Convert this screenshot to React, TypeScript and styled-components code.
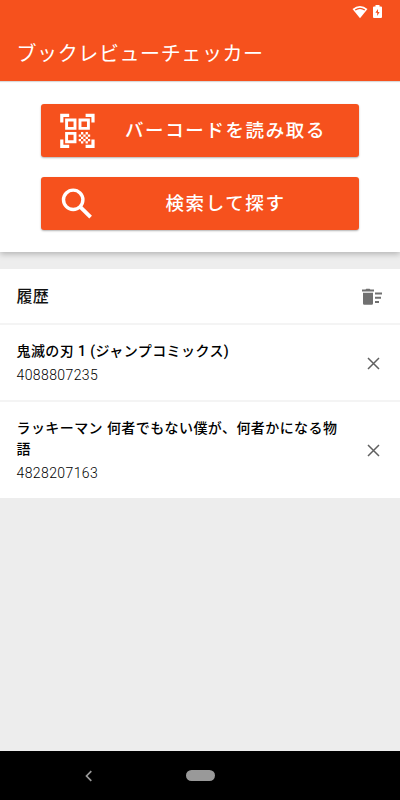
import React from 'react';
import styled, { createGlobalStyle } from 'styled-components';

const GlobalStyle = createGlobalStyle`
  * { box-sizing: border-box; }
  body { margin: 0; background: #ededed; font-family: Roboto, "Noto Sans CJK JP", sans-serif; }
`;

const Screen = styled.div`
  width: 400px;
  height: 800px;
  display: flex;
  flex-direction: column;
  overflow: hidden;
  background: #ededed;
`;

const AppBar = styled.header`
  height: 81px;
  flex: none;
  display: flex;
  flex-direction: column;
  background: #f6511d;
  color: #fff;
  box-shadow: 0 1px 1px rgba(0, 0, 0, 0.15);
  z-index: 1;
`;

const StatusBar = styled.div`
  height: 24px;
  display: flex;
  justify-content: flex-end;
  align-items: center;
  gap: 5px;
  padding-right: 18px;
`;

const Title = styled.h1`
  margin: 0;
  padding: 3px 0 0 16.5px;
  font-size: 20px;
  font-weight: 400;
  line-height: 54px;
  letter-spacing: 0.6px;
`;

const Actions = styled.section`
  height: 171px;
  flex: none;
  display: flex;
  flex-direction: column;
  gap: 20px;
  padding: 23px 41px 0;
  background: #fff;
  box-shadow: 0 2px 6px rgba(0, 0, 0, 0.25);
`;

const ActionButton = styled.button`
  height: 53px;
  display: flex;
  align-items: center;
  padding: 0 0 0 18px;
  border: 0;
  border-radius: 3px;
  background: #f6511d;
  box-shadow: 0 1px 2px rgba(0, 0, 0, 0.3);
  color: #fff;
  font: 500 18.5px/26px Roboto, "Noto Sans CJK JP", sans-serif;
  letter-spacing: 1.6px;
  svg { flex: none; }
`;

const ActionLabel = styled.span`
  flex: 1;
  padding-right: 19px;
  padding-left: 16px;
  text-align: center;
`;

const History = styled.section`
  margin-top: 17px;
  background: #fff;
`;

const HistoryHeader = styled.div`
  height: 54px;
  display: flex;
  justify-content: space-between;
  align-items: center;
  padding: 2px 17.500px 0 16.5px;
`;

const Heading = styled.h2`
  margin: 0;
  font-size: 16px;
  font-weight: 500;
  line-height: 24px;
  letter-spacing: 0.2px;
  color: #111;
`;

const Row = styled.div`
  display: flex;
  align-items: center;
  justify-content: space-between;
  border-top: 2px solid #f4f4f4;
  padding: 16px 20px 15px 16.500px;
`;

const RowText = styled.div`
  width: 326px;
`;

const BookTitle = styled.div`
  font-size: 14px;
  font-weight: 500;
  line-height: 21px;
  letter-spacing: 0.42px;
  color: #000;
`;

const Isbn = styled.div`
  margin-top: 3px;
  font-size: 14px;
  font-weight: 300;
  line-height: 20px;
  letter-spacing: 0.4px;
  color: #000;
`;

const NavBar = styled.nav`
  height: 49px;
  flex: none;
  display: flex;
  align-items: center;
  margin-top: auto;
  padding-left: 84px;
  background: #000;
`;

const HomePill = styled.span`
  width: 29px;
  height: 11px;
  margin-left: 93px;
  border-radius: 6px;
  background: #999;
`;

const WifiIcon = () => (
  <svg width="16" height="14" viewBox="0 0 16 14">
    <path d="M.5 4.1Q8-2.1 15.500 4.100L8 13.300Z" fill="#fff" />
    <path d="M3.200 5Q8 1.600 12.800 5" fill="none" stroke="#f6511d" strokeWidth="1.200" />
  </svg>
);

const BatteryIcon = () => (
  <svg width="9" height="14" viewBox="0 0 9 14">
    <path d="M2.500 0h4v1.500H8q1 0 1 1V12q0 1-1 1H1q-1 0-1-1V2.500q0-1 1-1h1.500Z" fill="#fff" />
    <path d="M5 4L2.400 7.800H4.200V11L6.600 7H5Z" fill="#f6511d" />
  </svg>
);

const QrIcon = () => (
  <svg width="36" height="36" viewBox="0 0 36 36" fill="none" stroke="#fff" strokeWidth="3.200">
    <path d="M2.800 9.500V2.300H10.200M26.600 2.300H34V9.500M2.800 26.500V33.400H10.200M26.600 33.400H34V26.500" />
    <path
      strokeWidth="2.900"
      d="M7.600 7h8.400v8.400H7.600ZM21 7h8.400v8.400H21ZM7.600 20.400h8.400v8.400H7.600Z"
    />
    <path
      fill="#fff"
      stroke="none"
      d="M19.700 21.400h2.300v2.300h-2.300ZM24.300 21.400h2.300v2.300h-2.300ZM22 19.100h2.300v2.300H22ZM26.600 19.100h2.300v2.300h-2.300ZM22 23.700h2.300V26H22ZM26.600 23.700h2.300V26h-2.300ZM28.900 21.400h2.300v2.300h-2.300ZM19.700 26H22v2.300h-2.300ZM24.300 26h2.300v2.300h-2.300ZM28.900 26h2.300v2.300h-2.300ZM22 28.300h2.300v2.300H22ZM26.600 28.300h2.300v2.300h-2.300Z"
    />
  </svg>
);

const SearchIcon = () => (
  <svg width="36" height="36" viewBox="0 0 36 36" fill="none" stroke="#fff">
    <circle cx="14.200" cy="13.800" r="9.700" strokeWidth="3.400" />
    <path d="M20.700 20.300L31.600 31.200" strokeWidth="3.800" />
  </svg>
);

const ClearAllIcon = () => (
  <svg width="22" height="18" viewBox="0 0 22 18" fill="#707070">
    <path d="M1 1.500H4.500L5.300.8H8.600L9.400 1.500H13V3.500H1ZM2 4.700H12V15.500q0 1.300-1.300 1.300H3.300Q2 16.800 2 15.500ZM14 4.500h7v2h-7ZM14 8.800h6v2h-6ZM14 13h4v2h-4Z" />
  </svg>
);

const CloseIcon = () => (
  <svg width="13" height="13" viewBox="0 0 13 13" stroke="#606060" strokeWidth="1.500">
    <path d="M1 1L12 12M12 1L1 12" />
  </svg>
);

const BackIcon = () => (
  <svg width="9" height="12" viewBox="0 0 9 12" fill="none" stroke="#999" strokeWidth="1.700">
    <path d="M7.300 1.200L2.500 6L7.300 10.800" />
  </svg>
);

const books = [
  { title: '鬼滅の刃 1 (ジャンプコミックス)', isbn: '4088807235' },
  { title: 'ラッキーマン 何者でもない僕が、何者かになる物語', isbn: '4828207163' },
];

export default function App() {
  return (
    <Screen lang="ja">
      <GlobalStyle />
      <AppBar>
        <StatusBar>
          <WifiIcon />
          <BatteryIcon />
        </StatusBar>
        <Title>ブックレビューチェッカー</Title>
      </AppBar>
      <Actions>
        <ActionButton>
          <QrIcon />
          <ActionLabel>バーコードを読み取る</ActionLabel>
        </ActionButton>
        <ActionButton>
          <SearchIcon />
          <ActionLabel>検索して探す</ActionLabel>
        </ActionButton>
      </Actions>
      <History>
        <HistoryHeader>
          <Heading>履歴</Heading>
          <ClearAllIcon />
        </HistoryHeader>
        {books.map((book) => (
          <Row key={book.isbn}>
            <RowText>
              <BookTitle>{book.title}</BookTitle>
              <Isbn>{book.isbn}</Isbn>
            </RowText>
            <CloseIcon />
          </Row>
        ))}
      </History>
      <NavBar>
        <BackIcon />
        <HomePill />
      </NavBar>
    </Screen>
  );
}
